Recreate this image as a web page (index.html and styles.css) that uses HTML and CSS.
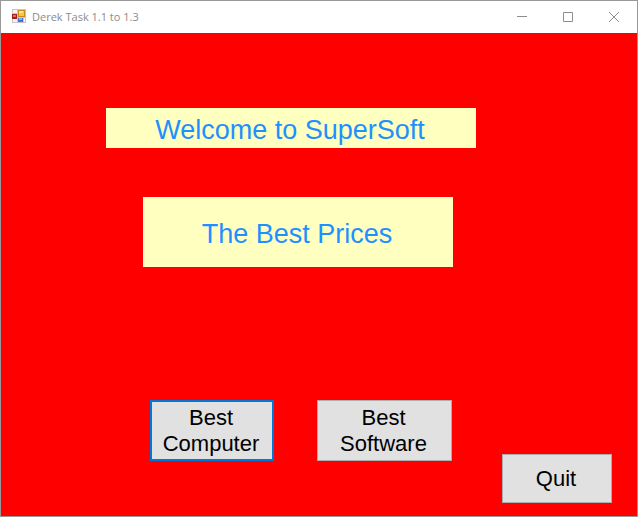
FILE: index.html
```html
<!DOCTYPE html>
<html lang="en">
<head>
<meta charset="utf-8">
<meta name="viewport" content="width=device-width, initial-scale=1">
<title>Derek Task 1.1 to 1.3</title>
<link rel="stylesheet" href="styles.css">
</head>
<body>
<div class="window">
  <header class="titlebar">
    <svg class="app-icon" width="14" height="16" viewBox="0 0 14 16" shape-rendering="crispEdges" aria-hidden="true">
      <path d="M0 0h14v14H0z" fill="#c8c8cc"/>
      <path d="M1 1h4v3H1zM1 10h4v3H1z" fill="#f4f4f4"/>
      <path d="M0 5h5v5H0z" fill="#a51c1c"/>
      <path d="M1 6h3v2H1z" fill="#e46a55"/>
      <path d="M6 1h7v7H6z" fill="#c98c18"/>
      <path d="M7 2h5v5H7z" fill="#f8c83c"/>
      <path d="M7 2h4v2H7z" fill="#ffe694"/>
      <path d="M6 9h5v4H6z" fill="#3e74d8"/>
      <path d="M7 9h3v2H7z" fill="#80b0f4"/>
      <path d="M12 9h1v4h-1z" fill="#f4f4f4"/>
    </svg>
    <h1 class="caption">Derek Task 1.1 to 1.3</h1>
    <div class="controls">
      <button class="control" type="button" aria-label="Minimize">
        <svg width="10" height="10" viewBox="0 0 10 10"><path d="M0 4.5h10"/></svg>
      </button>
      <button class="control" type="button" aria-label="Maximize">
        <svg width="10" height="10" viewBox="0 0 10 10"><path d="M.5.5h9v9h-9z"/></svg>
      </button>
      <button class="control" type="button" aria-label="Close">
        <svg width="10" height="10" viewBox="0 0 10 10"><path d="M0 0l10 10M10 0L0 10"/></svg>
      </button>
    </div>
  </header>
  <main class="form">
    <p class="banner welcome">Welcome to SuperSoft</p>
    <p class="banner prices">The Best Prices</p>
    <div class="actions">
      <button class="action computer" type="button">Best Computer</button>
      <button class="action software" type="button">Best Software</button>
      <button class="action quit" type="button">Quit</button>
    </div>
  </main>
</div>
</body>
</html>
```
FILE: styles.css
```css
* {
  box-sizing: border-box;
}

body {
  margin: 0;
  font-family: "Liberation Sans", Arial, sans-serif;
}

.window {
  display: flex;
  flex-direction: column;
  min-height: 100vh;
  border: 1px solid #999;
  background: #f00;
}

.titlebar {
  display: flex;
  align-items: center;
  height: 32px;
  padding-left: 11px;
  background: #fff;
}

.caption {
  margin: 0 auto 0 6px;
  font: 400 11px/16px "Open Sans", "Noto Sans", sans-serif;
  color: #8c8c8c;
}

.controls {
  display: flex;
  align-self: stretch;
}

.control {
  display: grid;
  place-items: center;
  width: 46px;
  padding: 0;
  border: 0;
  background: none;
}

.control svg {
  fill: none;
  stroke: #8c8c8c;
}

.form {
  display: flex;
  flex: 1;
  flex-direction: column;
  align-items: flex-start;
  padding: 75px 25px 13px 105px;
}

.banner {
  width: 100%;
  margin: 0;
  padding: 4px 2px 0 0;
  background: #ffffc0;
  color: #1e90ff;
  font-size: 27px;
  text-align: center;
}

.welcome {
  max-width: 370px;
  line-height: 36px;
}

.prices {
  max-width: 310px;
  margin: 49px 0 0 37px;
  line-height: 66px;
}

.actions {
  display: flex;
  align-self: stretch;
  align-items: flex-start;
  margin-top: auto;
  padding: 32px 0 0 44px;
}

.action {
  height: 61px;
  padding: 0 2px 0 0;
  border: 1px solid #adadad;
  background: #e1e1e1;
  color: #000;
  font-family: inherit;
  font-size: 22px;
  line-height: 26px;
}

.computer {
  width: 124px;
  margin-right: 43px;
  border: 2px solid #0078d7;
}

.software {
  width: 135px;
  padding: 0 18px 0 16px;
}

.quit {
  width: 110px;
  height: 49px;
  margin: 54px 0 0 auto;
}
```
